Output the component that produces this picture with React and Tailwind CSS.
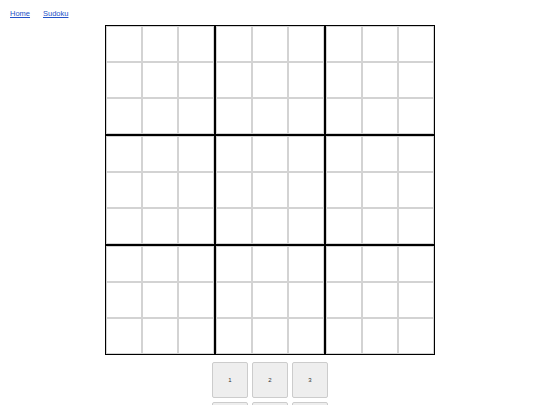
import React from "react";

const boxes = Array.from({ length: 9 }, (_, i) => i);
const cells = Array.from({ length: 9 }, (_, i) => i);
const keys = [1, 2, 3, 4, 5, 6, 7, 8, 9];

export default function App() {
  return (
    <div className="min-h-screen bg-white font-['Liberation_Sans',Arial,sans-serif]">
      {/* nav */}
      <div className="flex h-[25px] items-start gap-[13px] pl-[10px] pt-[10px] text-[7.5px] leading-[8px]">
        <a href="#" className="text-[#2452c8] underline">
          Home
        </a>
        <a href="#" className="text-[#2452c8] underline">
          Sudoku
        </a>
      </div>

      {/* board */}
      <div className="mx-auto grid w-[330px] grid-cols-3">
        {boxes.map((b) => (
          <div key={b} className="grid grid-cols-3 border border-black">
            {cells.map((c) => (
              <div
                key={c}
                className="h-[36px] w-[36px] border border-[#d3d3d3] bg-white"
              />
            ))}
          </div>
        ))}
      </div>

      {/* keypad */}
      <div className="mx-auto mt-[5px] flex w-[120px] flex-wrap">
        {keys.map((k) => (
          <button
            key={k}
            className="m-[2px] flex h-[36px] w-[36px] items-center justify-center rounded-[2px] border border-[#cccccc] bg-[#eeeeee] text-[6px] text-[#333]"
          >
            {k}
          </button>
        ))}
      </div>
    </div>
  );
}
